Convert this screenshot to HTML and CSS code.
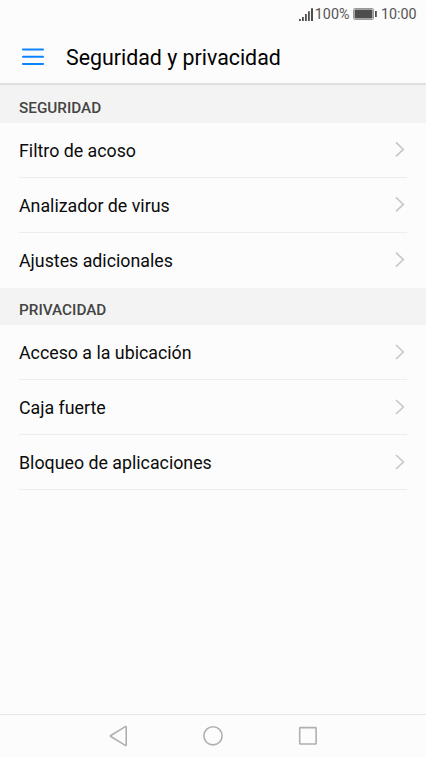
FILE: index.html
```html
<!DOCTYPE html>
<html lang="es">
<head>
<meta charset="utf-8">
<meta name="viewport" content="width=device-width">
<title>Seguridad y privacidad</title>
<link rel="stylesheet" href="styles.css">
</head>
<body>
<div class="status">
  <svg class="signal" width="14" height="13" viewBox="0 0 14 13"><path d="M0 11h1.8v2H0zM3 9h1.8v4H3zM6 6h1.8v7H6zM9 3.3h1.8V13H9zM12 .3h2V13h-2z"/></svg>
  <span class="percent">100%</span>
  <svg class="battery" width="24" height="12" viewBox="0 0 24 12"><rect class="case" x=".5" y=".5" width="20" height="11" rx="1"/><rect x="1.5" y="1.5" width="18" height="9"/><rect x="22" y="3" width="1.8" height="6"/></svg>
  <span class="clock">10:00</span>
</div>
<header class="header">
  <svg class="menu" width="22" height="18" viewBox="0 0 22 18"><path d="M.9 1.5h20.2M.9 8.7h20.2M.9 15.9h20.2"/></svg>
  <h1 class="title">Seguridad y privacidad</h1>
</header>
<main class="content">
  <h2 class="section first">SEGURIDAD</h2>
  <ul class="list">
    <li class="row"><span>Filtro de acoso</span><svg class="chevron" width="10" height="16" viewBox="0 0 10 16"><path d="M1 .4l7.3 7L1 14.4"/></svg></li>
    <li class="row"><span>Analizador de virus</span><svg class="chevron" width="10" height="16" viewBox="0 0 10 16"><path d="M1 .4l7.3 7L1 14.4"/></svg></li>
    <li class="row plain"><span>Ajustes adicionales</span><svg class="chevron" width="10" height="16" viewBox="0 0 10 16"><path d="M1 .6l7.3 7L1 14.6"/></svg></li>
  </ul>
  <h2 class="section">PRIVACIDAD</h2>
  <ul class="list">
    <li class="row"><span>Acceso a la ubicación</span><svg class="chevron" width="10" height="16" viewBox="0 0 10 16"><path d="M1 1l7.3 7L1 15"/></svg></li>
    <li class="row"><span>Caja fuerte</span><svg class="chevron" width="10" height="16" viewBox="0 0 10 16"><path d="M1 1l7.3 7L1 15"/></svg></li>
    <li class="row"><span>Bloqueo de aplicaciones</span><svg class="chevron" width="10" height="16" viewBox="0 0 10 16"><path d="M1 1l7.3 7L1 15"/></svg></li>
  </ul>
</main>
<nav class="nav">
  <svg width="20" height="22" viewBox="0 0 20 22"><path d="M18.2 2v18a.6.6 0 0 1-.9.4L2.8 11.5a.6.6 0 0 1 0-1L17.3 1.6a.6.6 0 0 1 .9.4z"/></svg>
  <svg width="20" height="22" viewBox="0 0 20 22"><circle cx="10" cy="10.8" r="9.1"/></svg>
  <svg width="20" height="22" viewBox="0 0 20 22"><rect x="1.7" y="2.6" width="16.4" height="16.4" rx=".6"/></svg>
</nav>
</body>
</html>
```
FILE: styles.css
```css
* { box-sizing: border-box; }
body {
  margin: 0;
  height: 757px;
  display: flex;
  flex-direction: column;
  overflow: hidden;
  background: #fcfcfc;
  color: #0b0b0b;
  font-family: Roboto, sans-serif;
}
svg { display: block; flex: none; }
.status {
  height: 30px;
  display: flex;
  align-items: center;
  justify-content: flex-end;
  padding-right: 9.5px;
  padding-bottom: 2px;
  color: #555;
  font-size: 14.3px;
  line-height: 20px;
}
.signal, .battery { fill: #4d4d4d; }
.percent { margin: 0 3.5px 0 2px; }
.battery { margin-right: 4px; }
.case { fill: none; stroke: #999; }
.header {
  height: 55px;
  display: flex;
  align-items: center;
  padding-left: 22px;
  border-bottom: 2px solid #dfdfdf;
}
.menu { fill: none; stroke: #0d84ff; stroke-width: 2; stroke-linecap: round; margin-right: 22px; }
.title { margin: 0; padding-top: 2px; font-size: 21.35px; font-weight: 400; line-height: 28px; color: #000; }
.content { flex: 1; }
.section {
  height: 37px;
  margin: 0;
  padding: 12px 19px 0;
  background: #f3f3f3;
  color: #444;
  font-size: 15.3px;
  font-weight: 500;
  line-height: 20px;
}
.first { height: 37.5px; padding-top: 13px; }
.list { margin: 0; padding: 0 19px; list-style: none; }
.row {
  height: 55px;
  display: flex;
  align-items: center;
  justify-content: space-between;
  padding-right: 2px;
  border-bottom: 1px solid #ededed;
  font-size: 17.8px;
  line-height: 24px;
}
.row span { padding-top: 2px; }
.plain { border-bottom-color: transparent; }
.chevron { fill: none; stroke: #c8c8c8; stroke-width: 1.7; overflow: visible; }
.nav {
  height: 43px;
  display: flex;
  align-items: center;
  justify-content: center;
  gap: 75px;
  border-top: 1px solid #e6e6e6;
}
.nav svg { fill: none; stroke: #b0b0b0; stroke-width: 1.6; }
```
